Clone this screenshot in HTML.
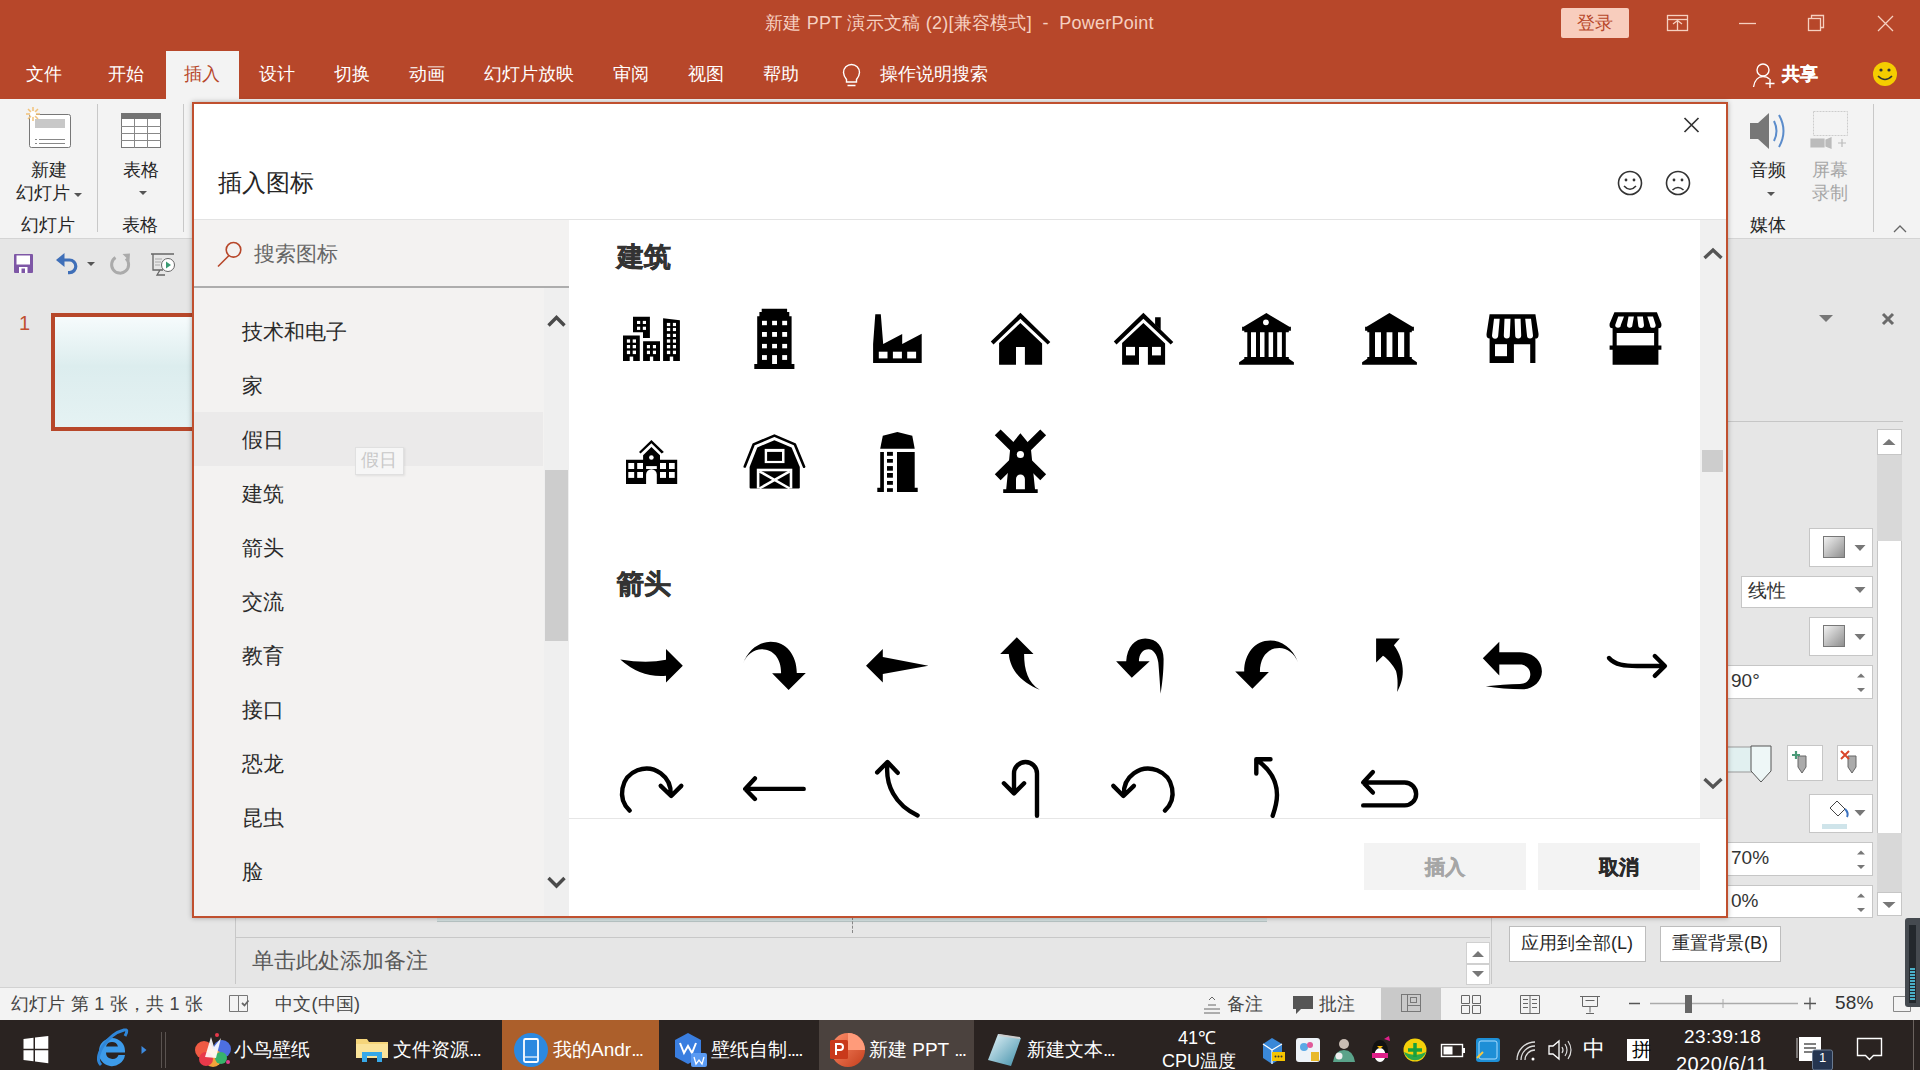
<!DOCTYPE html>
<html><head><meta charset="utf-8">
<style>
*{margin:0;padding:0;box-sizing:border-box}
html,body{width:1920px;height:1070px;overflow:hidden;background:#e6e6e6;font-family:"Liberation Sans",sans-serif;color:#262626}
.a{position:absolute;white-space:nowrap;line-height:1}
svg{position:absolute;overflow:visible}
.tt{color:#f6d0c0;font-size:18px;top:14px;letter-spacing:0.25px}
.tab{color:#fff;font-size:18px;top:65px}
.rt{font-size:18px;color:#262626}
.cat{font-size:21px;color:#2b2b2b;left:242px;margin-top:1px}
.hd{font-size:27px;font-weight:bold;color:#333;left:617px;-webkit-text-stroke:0.6px #333}
.fld{background:#fff;border:1px solid #c6c6c6}
.sb{font-size:18px;color:#444;letter-spacing:0.2px}
.tk{font-size:19px;color:#fff}
</style></head><body>
<!-- title bar + tabs -->
<div class="a" style="left:0;top:0;width:1920px;height:99px;background:#b7472a"></div>
<div class="a tt" style="left:765px">新建 PPT 演示文稿 (2)[兼容模式]&nbsp; - &nbsp;PowerPoint</div>
<div class="a" style="left:1561px;top:8px;width:68px;height:30px;background:#f8cdbd;border-radius:2px"></div>
<div class="a" style="left:1577px;top:14px;font-size:18px;color:#b7472a">登录</div>
<svg style="left:0;top:0" width="1920" height="100">
 <g fill="none" stroke="#f6d0c0" stroke-width="1.3">
  <rect x="1667.5" y="15.5" width="20" height="15"/><line x1="1667" y1="19.5" x2="1688" y2="19.5"/>
  <path d="M1673 24l4.5-3.5 4.5 3.5M1677.5 21v9"/>
  <line x1="1739" y1="23.5" x2="1756" y2="23.5"/>
  <rect x="1808.5" y="18.5" width="12" height="12"/><path d="M1811.5 18.5v-3h12v12h-3"/>
  <path d="M1878 16l15 15M1893 16l-15 15"/>
 </g>
 <g fill="none" stroke="#fff" stroke-width="1.4">
  <circle cx="1763" cy="70" r="6"/><path d="M1753.5 87c1-7 5-10.5 9.5-10.5 3 0 5 1 6.5 2.5"/><path d="M1770 79v9M1765.5 83.5h9"/>
  <path d="M846.5 79.5c-1.5-2-3-4-3-7a8 8 0 0 1 16 0c0 3-1.5 5-3 7v2.5h-10z M847.5 85.5h8"/>
 </g>
 <circle cx="1885" cy="74" r="12" fill="#f5cd00"/>
 <circle cx="1881" cy="70" r="1.6" fill="#333"/><circle cx="1889" cy="70" r="1.6" fill="#333"/>
 <path d="M1878 76q7 7 14 0" fill="none" stroke="#333" stroke-width="1.6"/>
</svg>
<div class="a" style="left:166px;top:51px;width:73px;height:48px;background:#f3f3f3"></div>
<div class="a tab" style="left:26px">文件</div>
<div class="a tab" style="left:108px">开始</div>
<div class="a tab" style="left:184px;color:#b7472a">插入</div>
<div class="a tab" style="left:259px">设计</div>
<div class="a tab" style="left:334px">切换</div>
<div class="a tab" style="left:409px">动画</div>
<div class="a tab" style="left:484px">幻灯片放映</div>
<div class="a tab" style="left:613px">审阅</div>
<div class="a tab" style="left:688px">视图</div>
<div class="a tab" style="left:763px">帮助</div>
<div class="a tab" style="left:880px">操作说明搜索</div>
<div class="a tab" style="left:1782px;font-weight:bold;-webkit-text-stroke:0.3px #fff">共享</div>

<!-- ribbon -->
<div class="a" style="left:0;top:99px;width:1920px;height:140px;background:#f3f3f3;border-bottom:1px solid #d4d4d4"></div>
<div class="a" style="left:97px;top:104px;width:1px;height:128px;background:#c8c8c8"></div>
<div class="a" style="left:183px;top:104px;width:1px;height:128px;background:#c8c8c8"></div>
<div class="a" style="left:1873px;top:104px;width:1px;height:128px;background:#c8c8c8"></div>
<div class="a rt" style="left:31px;top:161px">新建</div>
<div class="a rt" style="left:16px;top:184px">幻灯片</div>
<div class="a rt" style="left:21px;top:216px">幻灯片</div>
<div class="a rt" style="left:123px;top:161px">表格</div>
<div class="a rt" style="left:122px;top:216px">表格</div>
<div class="a rt" style="left:1750px;top:161px">音频</div>
<div class="a rt" style="left:1812px;top:161px;color:#a6a6a6">屏幕</div>
<div class="a rt" style="left:1812px;top:184px;color:#a6a6a6">录制</div>
<div class="a rt" style="left:1750px;top:216px">媒体</div>
<svg style="left:0;top:99px" width="1920" height="141">
 <!-- new slide -->
 <rect x="29.5" y="15.5" width="41" height="33" rx="2" fill="#fff" stroke="#777"/>
 <rect x="35" y="20" width="30" height="9" fill="#c8c8c8"/>
 <path d="M39 40.5h26M39 44.5h26" stroke="#888" stroke-width="1"/>
 <path d="M35 40.5h2M35 44.5h2" stroke="#888"/>
 <g stroke="#f2c27a" stroke-width="1.5"><path d="M33 8v14M26 15h14M28 10l10 10M38 10l-10 10"/></g>
 <circle cx="33" cy="15" r="3" fill="#fff"/>
 <!-- table -->
 <rect x="121.5" y="14.5" width="39" height="34" fill="#fff" stroke="#777"/>
 <rect x="121" y="14" width="40" height="6" fill="#737373"/>
 <path d="M121 27.5h40M121 34.5h40M121 41.5h40M134.5 20v29M147.5 20v29" stroke="#888" fill="none"/>
 <path d="M74 94l4 4 4-4z M139 92l4 4 4-4z M1767 93l4 4 4-4z" fill="#555"/>
 <!-- audio -->
 <path d="M1750 24h8l11-10v36l-11-10h-8z" fill="#777"/>
 <path d="M1774 22q5 10 0 20M1779 16q9 16 0 32" fill="none" stroke="#5b8ccb" stroke-width="2"/>
 <!-- screen rec -->
 <rect x="1813.5" y="12.5" width="34" height="24" fill="none" stroke="#ccc" stroke-dasharray="2 1"/>
 <path d="M1811 40h13v8h-13zM1826 41l5-2v10l-5-2z M1838 44h8M1842 40v8" fill="#bbb" stroke="#bbb" stroke-width="1.2"/>
 <path d="M1894 133l6-6 6 6" fill="none" stroke="#666" stroke-width="1.3"/>
</svg>

<!-- quick access -->
<svg style="left:0;top:240px" width="192" height="60">
 <rect x="14" y="14" width="19" height="19" rx="1" fill="#7e57a6"/>
 <rect x="16.5" y="15.5" width="13.5" height="9" fill="#fff"/>
 <rect x="19" y="27" width="8.5" height="6" fill="#fff"/><rect x="21.5" y="28.5" width="3.5" height="4.5" fill="#7e57a6"/>
 <path d="M56 20l8.5-7v14z" fill="#3f6fb8"/><path d="M63 20h6.5a6.3 6.3 0 0 1 0 12.6h-1.5" fill="none" stroke="#3f6fb8" stroke-width="3.2"/>
 <path d="M87 22l4 4 4-4z" fill="#555"/>
 <path d="M115.5 17.5A8.5 8.5 0 1 0 126 18.5" fill="none" stroke="#ababab" stroke-width="3"/><path d="M122.5 14l7.5-0.5-0.5 7.5z" fill="#ababab"/>
 <path d="M151 14h23M153 14v16h10M160 30l-3 5h8" fill="none" stroke="#666" stroke-width="1.3"/>
 <path d="M155 19h7M155 22h6M155 25h5" stroke="#aaa"/>
 <circle cx="168" cy="25" r="6.5" fill="#fff" stroke="#666"/><path d="M166 21.5v7l5-3.5z" fill="#3b9b74"/>
</svg>
<div class="a" style="left:19px;top:313px;font-size:20px;color:#c0502f;font-family:'Liberation Sans'">1</div>
<div class="a" style="left:51px;top:313px;width:160px;height:118px;border:4px solid #b7472a;background:linear-gradient(#f6fbfc,#dcedee 45%,#e5f2f3)"></div>

<!-- notes + status -->
<div class="a" style="left:235px;top:918px;width:1255px;height:66px;background:#e6e6e6;border-left:1px solid #c8c8c8"></div>
<div class="a" style="left:236px;top:937px;width:1254px;height:1px;background:#c8c8c8"></div>
<div class="a" style="left:437px;top:917px;width:830px;height:5px;background:#d3e0e0;border-bottom:1px solid #b8c4c4"></div>
<div class="a" style="left:852px;top:917px;width:1px;height:16px;border-left:1px dashed #888"></div>

<div class="a" style="left:252px;top:950px;font-size:22px;color:#595959">单击此处添加备注</div>
<div class="a" style="left:1491px;top:918px;width:1px;height:66px;background:#c8c8c8"></div>
<div class="a fld" style="left:1466px;top:942px;width:24px;height:22px;border-color:#d0d0d0"></div>
<div class="a fld" style="left:1466px;top:964px;width:24px;height:21px;border-color:#d0d0d0"></div>
<svg style="left:1466px;top:942px" width="24" height="44"><path d="M6 15l6-6 6 6z M6 29l6 6 6-6z" fill="#777"/></svg>
<div class="a fld" style="left:1509px;top:926px;width:137px;height:36px;border-color:#bdbdbd"></div>
<div class="a" style="left:1521px;top:934px;font-size:18px;color:#262626">应用到全部(L)</div>
<div class="a fld" style="left:1660px;top:926px;width:121px;height:36px;border-color:#bdbdbd"></div>
<div class="a" style="left:1672px;top:934px;font-size:18px;color:#262626">重置背景(B)</div>

<div class="a" style="left:0;top:987px;width:1920px;height:33px;background:#f3f3f3;border-top:1px solid #d2d2d2"></div>
<div class="a sb" style="left:11px;top:995px">幻灯片 第 1 张，共 1 张</div>
<div class="a sb" style="left:275px;top:995px">中文(中国)</div>
<div class="a sb" style="left:1227px;top:995px">备注</div>
<div class="a sb" style="left:1319px;top:995px">批注</div>
<div class="a" style="left:1381px;top:988px;width:60px;height:32px;background:#c9c9c9"></div>
<div class="a sb" style="left:1835px;top:993px;font-size:19px;color:#333">58%</div>
<svg style="left:0;top:990px" width="1920" height="30">
 <path d="M229.5 5.5h9v16h-9z M238.5 5.5h9v16h-9z" fill="none" stroke="#777"/><path d="M242 13l2.5 2.5 4-5" fill="none" stroke="#666" stroke-width="1.8"/>
 <path d="M1204 23h16M1204 19h16M1208 15h8M1209 10l3-3 3 3" fill="none" stroke="#666"/>
 <path d="M1293 6h20v13h-12l-5 5v-5h-3z" fill="#555"/>
 <rect x="1401.5" y="4.5" width="19" height="17" fill="none" stroke="#777"/><path d="M1407.5 4.5v17M1407.5 15.5h13" stroke="#777"/><rect x="1410.5" y="7.5" width="6" height="5" fill="none" stroke="#777"/>
 <path d="M1461.5 5.5h8v8h-8zM1472.5 5.5h8v8h-8zM1461.5 15.5h8v8h-8zM1472.5 15.5h8v8h-8z" fill="none" stroke="#666"/>
 <path d="M1520.5 5.5h19v18h-19zM1530 5.5v18M1523 9.5h5M1523 13.5h5M1523 17.5h5M1532 9.5h5M1532 13.5h5M1532 17.5h5" fill="none" stroke="#666"/>
 <path d="M1580 6.5h20M1582.5 6.5v10h15v-10M1590 16.5v6M1586 23.5h8M1585.5 10.5h9" fill="none" stroke="#666"/>
 <path d="M1629 13.5h11M1804 13.5h12M1810 7.5v12" stroke="#555" stroke-width="1.3"/>
 <path d="M1650 13.5h148" stroke="#aaa" stroke-width="1.5"/>
 <path d="M1723 9v9" stroke="#aaa"/>
 <rect x="1685" y="5" width="7" height="18" fill="#666"/>
 <path d="M1893.5 6.5h17v15h-17z" fill="none" stroke="#888"/>
</svg>

<!-- taskbar -->
<div class="a" style="left:0;top:1020px;width:1920px;height:50px;background:#2a2321"></div>
<div class="a" style="left:502px;top:1020px;width:157px;height:50px;background:#ac5f2b"></div>
<div class="a" style="left:819px;top:1020px;width:155px;height:50px;background:#4b423e"></div>
<div class="a tk" style="left:234px;top:1040px">小鸟壁纸</div>
<div class="a tk" style="left:393px;top:1040px">文件资源<span style="letter-spacing:-1.5px">...</span></div>
<div class="a tk" style="left:553px;top:1040px">我的Andr<span style="letter-spacing:-1.5px">...</span></div>
<div class="a tk" style="left:711px;top:1040px">壁纸自制<span style="letter-spacing:-1.5px">....</span></div>
<div class="a tk" style="left:869px;top:1040px">新建 PPT <span style="letter-spacing:-1.5px">...</span></div>
<div class="a tk" style="left:1027px;top:1040px">新建文本<span style="letter-spacing:-1.5px">...</span></div>
<div class="a tk" style="left:1178px;top:1029px;font-size:18px">41℃</div>
<div class="a tk" style="left:1162px;top:1052px;font-size:18px">CPU温度</div>
<div class="a tk" style="left:1684px;top:1027px;font-size:19px;letter-spacing:0.4px">23:39:18</div>
<div class="a tk" style="left:1676px;top:1054px;font-size:20px;letter-spacing:0.5px">2020/6/11</div>
<div class="a tk" style="left:1583px;top:1038px;font-size:22px">中</div>
<svg style="left:0;top:1020px" width="1920" height="50">
 <defs>
  <linearGradient id="ppt" x1="0" y1="0" x2="1" y2="1"><stop offset="0" stop-color="#ff8f6b"/><stop offset="1" stop-color="#c43e1c"/></linearGradient>
  <linearGradient id="np" x1="0" y1="0" x2="1" y2="1"><stop offset="0" stop-color="#e8f6fb"/><stop offset="1" stop-color="#3e8ea8"/></linearGradient>
 </defs>
 <path d="M23.5 19l10-1.2v11H23.5z M35 17.6l13.3-1.6v12.8H35z M23.5 30.3h10v11L23.5 40z M35 30.3h13.3v12.9L35 41.5z" fill="#fff"/>
 <path d="M99 31a13 13 0 0 1 26 0v1.5H106a6.5 6.5 0 0 0 12.5 2.5h6.5a13 13 0 0 1-26-4z M106 26.5h12a6.3 6.3 0 0 0-12 0z" fill="#3d9be9" fill-rule="evenodd"/>
 <path d="M101 45q-6-6 2-19q9-13 21-16q5-1 1 6" fill="none" stroke="#2f86d8" stroke-width="3"/>
 <path d="M141.5 26l5 4-5 4z" fill="#3d8be0"/>
 <path d="M161.5 12v36M165.5 12v36" stroke="#5a5350" stroke-width="1"/>
 <circle cx="204" cy="30" r="9" fill="#ef5a43"/><circle cx="222" cy="29" r="9" fill="#4d6fe0"/><circle cx="213" cy="38" r="9" fill="#f2a33a"/><circle cx="206" cy="39" r="7" fill="#e8394a"/><circle cx="221" cy="38" r="6" fill="#37b36b"/>
 <path d="M205 37l6-20 3 10 7-9-5 20z" fill="#fff" opacity=".9"/>
 <circle cx="217" cy="15" r="2" fill="#e8394a"/><circle cx="228" cy="42" r="2" fill="#e04090"/>
 <path d="M356 19h11l2 3h19v16h-32z" fill="#f5d57a"/><path d="M356 24h32v14h-32z" fill="#fae39a"/>
 <path d="M362 42v-10h20v10h-5v-6h-10v6z" fill="#37a8e8"/>
 <circle cx="531" cy="30" r="17" fill="#2c89e0"/><rect x="524" y="19" width="14" height="23" rx="1.5" fill="none" stroke="#fff" stroke-width="1.8"/><path d="M525 37h12" stroke="#fff" stroke-width="1.2"/>
 <path d="M688 13l13 7v17l-13 7-13-7V20z" fill="#3a7ee0"/>
 <path d="M680 23l4 10 4-7 4 7 4-10" fill="none" stroke="#fff" stroke-width="2"/>
 <rect x="691" y="33" width="16" height="14" rx="2" fill="#5a9af2"/><path d="M694 37l2 7 3-4 3 4 2-7" fill="none" stroke="#fff" stroke-width="1.3"/>
 <circle cx="848" cy="30" r="17" fill="url(#ppt)"/><path d="M848 13a17 17 0 0 1 17 17h-17z" fill="#ff9b7a"/>
 <rect x="830" y="20" width="18" height="19" rx="1.5" fill="#c9391b"/><path d="M836 35v-11h4a3 3 0 0 1 0 6h-4" fill="none" stroke="#fff" stroke-width="2"/>
 <path d="M998 14l23 4-10 28-23-6z" fill="url(#np)"/><path d="M999 15l21 3" stroke="#ccc" stroke-width="2"/>
 <path d="M1263 24l9-6 10 6v14l-10 6-9-6z" fill="#3a88d8"/><path d="M1263 24l9 6 10-6M1272 30v14" stroke="#fff" stroke-width="1.2" fill="none"/>
 <rect x="1272" y="32" width="13" height="9" fill="#f5c400"/><circle cx="1275.5" cy="36.5" r="1" fill="#333"/><circle cx="1278.5" cy="36.5" r="1" fill="#333"/><circle cx="1281.5" cy="36.5" r="1" fill="#333"/>
 <rect x="1296" y="18" width="24" height="24" rx="3" fill="#eef3f8"/><circle cx="1304" cy="27" r="4" fill="#5aa9e6"/><circle cx="1310" cy="25" r="3" fill="#e05a9a"/><rect x="1311" y="32" width="8" height="9" fill="#e8b92a"/>
 <circle cx="1344" cy="24" r="5" fill="#c8bcb3"/><path d="M1333 42q2-12 11-12t11 12z" fill="#5aa38a"/><circle cx="1339" cy="36" r="3.5" fill="#eee"/>
 <ellipse cx="1380" cy="31" rx="8" ry="11" fill="#111"/><ellipse cx="1380" cy="35" rx="5.5" ry="7" fill="#fff"/><path d="M1372 33h16v5h-16z" fill="#e0208a"/><path d="M1384 19l5-3 1 5z" fill="#e0208a"/><path d="M1377 26h6l-3 3z" fill="#f5b400"/>
 <circle cx="1415" cy="30" r="11.5" fill="#f5d10a"/><path d="M1404 32a11.5 11.5 0 0 0 22 0q-11 6-22 0z" fill="#2aa84a"/><path d="M1415 23v14M1408 30h14" stroke="#19a03c" stroke-width="3.5"/>
 <rect x="1441.5" y="24.5" width="21" height="12" fill="none" stroke="#fff" stroke-width="1.4"/><rect x="1443.5" y="26.5" width="9" height="8" fill="#fff"/><rect x="1463" y="28" width="2" height="5" fill="#fff"/>
 <rect x="1476" y="18" width="24" height="24" rx="3" fill="#1e8fd6"/><rect x="1479" y="21" width="18" height="18" rx="2" fill="none" stroke="#a8dcff" stroke-width="1"/><path d="M1477 38l6-6" stroke="#f5c842" stroke-width="2"/>
 <g fill="none" stroke="#ddd" stroke-width="1.3"><path d="M1517 40a18 18 0 0 1 18-18M1521 40a14 14 0 0 1 14-14M1525 40a10 10 0 0 1 10-10"/></g><circle cx="1533" cy="39" r="1.5" fill="#fff"/>
 <path d="M1549 26h4l6-5v18l-6-5h-4z" fill="none" stroke="#fff" stroke-width="1.3"/><path d="M1562 27q2 3 0 6M1565 24q4 6 0 12M1568 21q6 9 0 18" fill="none" stroke="#ddd" stroke-width="1.2"/>
 <rect x="1627" y="19" width="22" height="22" fill="#fff"/>
 <path d="M1797 18v20" stroke="#ccc"/><rect x="1799" y="17" width="22" height="24" fill="#fff"/><path d="M1804 24h12M1804 28h12M1804 32h8" stroke="#555" stroke-width="1.5"/>
 <rect x="1812.5" y="30" width="20" height="20" rx="2" fill="#253550" stroke="#6a7a90"/>
 <path d="M1857.5 18.5h24v17h-8l-4 4-4-4h-8z" fill="none" stroke="#fff" stroke-width="1.4"/>
 <path d="M1913.5 0v50" stroke="#6a625e"/>
</svg>
<div class="a" style="left:1632px;top:1040px;font-size:19px;color:#000">拼</div>
<div class="a" style="left:1819px;top:1051px;font-size:13px;color:#fff">1</div>


<!-- right format pane -->
<div class="a" style="left:1727px;top:421px;width:176px;height:1px;background:#c6c6c6"></div>
<svg style="left:1727px;top:240px" width="193" height="750">
 <path d="M92 75l7 7 7-7z" fill="#777"/>
 <path d="M156 74l10 10M166 74l-10 10" stroke="#6a6a6a" stroke-width="3"/>
</svg>
<div class="a fld" style="left:1877px;top:429px;width:25px;height:26px"></div>
<div class="a" style="left:1877px;top:455px;width:25px;height:86px;background:#d8d8d8"></div>
<div class="a" style="left:1877px;top:541px;width:25px;height:292px;background:#fff;border-left:1px solid #c6c6c6;border-right:1px solid #c6c6c6"></div>
<div class="a" style="left:1877px;top:833px;width:25px;height:59px;background:#d8d8d8"></div>
<div class="a fld" style="left:1877px;top:892px;width:25px;height:24px"></div>
<div class="a fld" style="left:1809px;top:528px;width:64px;height:39px"></div>
<div class="a fld" style="left:1741px;top:576px;width:132px;height:32px"></div>
<div class="a" style="left:1748px;top:581px;font-size:19px;color:#333">线性</div>
<div class="a fld" style="left:1809px;top:617px;width:64px;height:39px"></div>
<div class="a fld" style="left:1710px;top:665px;width:163px;height:34px"></div>
<div class="a" style="left:1731px;top:671px;font-size:19px;color:#333">90°</div>
<div class="a fld" style="left:1787px;top:745px;width:36px;height:36px"></div>
<div class="a fld" style="left:1837px;top:745px;width:36px;height:36px"></div>
<div class="a fld" style="left:1809px;top:794px;width:64px;height:39px"></div>
<div class="a fld" style="left:1710px;top:842px;width:163px;height:34px"></div>
<div class="a" style="left:1731px;top:848px;font-size:19px;color:#333">70%</div>
<div class="a fld" style="left:1710px;top:885px;width:163px;height:33px"></div>
<div class="a" style="left:1731px;top:891px;font-size:19px;color:#333">0%</div>
<svg style="left:1700px;top:420px" width="220" height="500">
 <path d="M182.5 25l6.5-6 6.5 6z M182.5 482l6.5 6 6.5-6z" fill="#777"/>
 <defs><linearGradient id="gg" x1="0" y1="0" x2="1" y2="1"><stop offset="0" stop-color="#f4f4f4"/><stop offset="1" stop-color="#8c8c8c"/></linearGradient></defs>
 <rect x="123.5" y="116.5" width="21" height="21" fill="url(#gg)" stroke="#777"/>
 <rect x="123.5" y="205.5" width="21" height="21" fill="url(#gg)" stroke="#777"/>
 <path d="M154.5 125l5.5 6 5.5-6z M154.5 167l5.5 6 5.5-6z M154.5 214l5.5 6 5.5-6z M154.5 390l5.5 6 5.5-6z" fill="#777"/>
 <path d="M157 257.5l4-4 4 4z M157 268l4 4 4-4z M157 434.5l4-4 4 4z M157 445l4 4 4-4z M157 477.5l4-4 4 4z M157 488l4 4 4-4z" fill="#777"/>
 <rect x="27" y="327" width="34" height="25" fill="#e1f0f0" stroke="#999"/>
 <path d="M51 326h20v25l-10 11-10-11z" fill="#eef7f7" stroke="#555"/>
 <path d="M98 336v11l4 6 4-6v-11z" fill="#aaa" stroke="#666"/><path d="M92 335h8M96 331v8" stroke="#4a9a78" stroke-width="2.2"/>
 <path d="M148 336v11l4 6 4-6v-11z" fill="#aaa" stroke="#666"/><path d="M141 331l8 8M149 331l-8 8" stroke="#d9462b" stroke-width="2"/>
 <path d="M130 388l7-7 8 8-7 7z" fill="#fff" stroke="#444"/><path d="M145 389q4 4 2 8" stroke="#3b72c0" stroke-width="2" fill="none"/>
 <rect x="122" y="404" width="25" height="5" fill="#cfe4ea"/>
</svg>
<div class="a" style="left:1905px;top:918px;width:15px;height:89px;background:#454a50;border-radius:3px 0 0 3px"></div><div class="a" style="left:1909px;top:925px;width:7px;height:78px;background:#23282d"></div><div class="a" style="left:1910px;top:968px;width:5px;height:33px;background:repeating-linear-gradient(#4ab0c8 0 2px,#23282d 2px 3px)"></div>

<!-- DIALOG -->
<div class="a" style="left:192px;top:102px;width:1536px;height:816px;border:2px solid #c0502f;background:#fff;box-shadow:0 0 5px rgba(0,0,0,.3)"></div>
<div class="a" style="left:194px;top:219px;width:1532px;height:1px;background:#e3e3e3"></div>
<div class="a" style="left:218px;top:171px;font-size:24px;color:#262626">插入图标</div>
<svg style="left:1600px;top:104px" width="126" height="100">
 <path d="M84.5 14l14 14M98.5 14l-14 14" stroke="#333" stroke-width="1.7"/>
 <g fill="none" stroke="#333" stroke-width="1.6">
  <circle cx="30" cy="79" r="11.5"/><path d="M24 82q6 6.5 12 0"/>
  <circle cx="78" cy="79" r="11.5"/><path d="M72.5 86q5.5-5 11 0"/>
 </g>
 <circle cx="26" cy="76" r="1.4" fill="#333"/><circle cx="34" cy="76" r="1.4" fill="#333"/>
 <circle cx="74" cy="76" r="1.4" fill="#333"/><circle cx="82" cy="76" r="1.4" fill="#333"/>
</svg>
<!-- left panel -->
<div class="a" style="left:194px;top:220px;width:375px;height:696px;background:#f3f2f1"></div>
<div class="a" style="left:194px;top:286px;width:375px;height:2px;background:#adadad"></div>
<svg style="left:194px;top:220px" width="375" height="70">
 <circle cx="39.5" cy="29.8" r="7.3" fill="none" stroke="#b7472a" stroke-width="1.6"/>
 <path d="M35 35.5l-11 11" stroke="#b7472a" stroke-width="1.6"/>
</svg>
<div class="a" style="left:254px;top:243px;font-size:21px;color:#666">搜索图标</div>
<div class="a" style="left:194px;top:412px;width:349px;height:54px;background:#ebeaea"></div>
<div class="a cat" style="top:320px">技术和电子</div>
<div class="a cat" style="top:374px">家</div>
<div class="a cat" style="top:428px">假日</div>
<div class="a cat" style="top:482px">建筑</div>
<div class="a cat" style="top:536px">箭头</div>
<div class="a cat" style="top:590px">交流</div>
<div class="a cat" style="top:644px">教育</div>
<div class="a cat" style="top:698px">接口</div>
<div class="a cat" style="top:752px">恐龙</div>
<div class="a cat" style="top:806px">昆虫</div>
<div class="a cat" style="top:860px">脸</div>
<div class="a" style="left:544px;top:288px;width:25px;height:628px;background:#efefef"></div>
<div class="a" style="left:545px;top:470px;width:23px;height:171px;background:#cdcdcd"></div>
<svg style="left:545px;top:300px" width="24" height="600">
 <path d="M3.5 25.5l8-8 8 8M3.5 578l8 8 8-8" fill="none" stroke="#4a4a4a" stroke-width="3.4"/>
</svg>
<div class="a" style="left:355px;top:447px;width:49px;height:28px;background:#f6f6f6;border:1px solid #e0e0e0;box-shadow:1px 1px 2px rgba(0,0,0,.08)"></div>
<div class="a" style="left:361px;top:451px;font-size:18px;color:#c8c8c8">假日</div>
<!-- right content -->
<div class="a" style="left:1700px;top:220px;width:26px;height:598px;background:#f0f0f0"></div>
<div class="a" style="left:1702px;top:450px;width:21px;height:22px;background:#cdcdcd"></div>
<svg style="left:1700px;top:220px" width="26" height="600">
 <path d="M4.5 38l8.5-8 8.5 8M4.5 559l8.5 8 8.5-8" fill="none" stroke="#555" stroke-width="3.4"/>
</svg>
<div class="a" style="left:569px;top:818px;width:1157px;height:1px;background:#e6e6e6"></div>
<div class="a hd" style="top:244px">建筑</div>
<div class="a hd" style="top:571px">箭头</div>
<div id="icons"><div class="a" style="left:569px;top:220px;width:1131px;height:598px;overflow:hidden"><svg style="left:0;top:0" width="1131" height="598"><g transform="translate(-569 -220)"><g transform="translate(611 299)"><path d="M12 36.5H28.8V62H12z M22 17.7H38.9V38.9H32V33.3H22z M32.1 42.2H49V62H32.1z M52.1 19.2L68.9 21.3V62H52.1z" fill="#000"/><rect x="15.9" y="40.4" width="3.2" height="3.3" fill="#fff"/><rect x="15.9" y="46" width="3.2" height="3.3" fill="#fff"/><rect x="15.9" y="51.6" width="3.2" height="3.5" fill="#fff"/><rect x="21.7" y="40.4" width="3.3" height="3.3" fill="#fff"/><rect x="21.7" y="46" width="3.3" height="3.3" fill="#fff"/><rect x="21.7" y="51.6" width="3.3" height="3.5" fill="#fff"/><rect x="18.7" y="57.6" width="3.5" height="4.9" fill="#fff"/><rect x="26" y="21.9" width="3.2" height="3.1" fill="#fff"/><rect x="26" y="27.7" width="3.2" height="3.2" fill="#fff"/><rect x="31.8" y="21.9" width="3.2" height="3.1" fill="#fff"/><rect x="31.8" y="27.7" width="3.2" height="3.2" fill="#fff"/><rect x="35.9" y="46" width="3.1" height="3.3" fill="#fff"/><rect x="35.9" y="51.7" width="3.1" height="3.4" fill="#fff"/><rect x="41.9" y="46" width="3.1" height="3.3" fill="#fff"/><rect x="41.9" y="51.7" width="3.1" height="3.4" fill="#fff"/><rect x="38.9" y="57.6" width="3.3" height="4.9" fill="#fff"/><rect x="55.9" y="23.9" width="3.3" height="3.2" fill="#fff"/><rect x="55.9" y="28.9" width="3.3" height="3.2" fill="#fff"/><rect x="55.9" y="34.8" width="3.3" height="3.2" fill="#fff"/><rect x="55.9" y="40.4" width="3.3" height="3.3" fill="#fff"/><rect x="55.9" y="46" width="3.3" height="3.3" fill="#fff"/><rect x="55.9" y="51.7" width="3.3" height="3.4" fill="#fff"/><rect x="61.9" y="23.9" width="3.1" height="3.2" fill="#fff"/><rect x="61.9" y="28.9" width="3.1" height="3.2" fill="#fff"/><rect x="61.9" y="34.8" width="3.1" height="3.2" fill="#fff"/><rect x="61.9" y="40.4" width="3.1" height="3.3" fill="#fff"/><rect x="61.9" y="46" width="3.1" height="3.3" fill="#fff"/><rect x="61.9" y="51.7" width="3.1" height="3.4" fill="#fff"/><rect x="58.8" y="57.6" width="3.4" height="4.9" fill="#fff"/></g><g transform="translate(734 299)"><path d="M27.7 9.7H53.1V13.1H55.3V17.2H57.6V65H60.4V69.9H20.3V65H23.2V17.2H25.4V13.1H27.7z" fill="#000"/><rect x="28" y="21.8" width="4.9" height="4.4" fill="#fff"/><rect x="28" y="33" width="4.9" height="4.8" fill="#fff"/><rect x="28" y="44.9" width="4.9" height="4.4" fill="#fff"/><rect x="28" y="56.1" width="4.9" height="4.8" fill="#fff"/><rect x="38.1" y="21.8" width="4.9" height="4.4" fill="#fff"/><rect x="38.1" y="33" width="4.9" height="4.8" fill="#fff"/><rect x="38.1" y="44.9" width="4.9" height="4.4" fill="#fff"/><rect x="48.2" y="21.8" width="4.9" height="4.4" fill="#fff"/><rect x="48.2" y="33" width="4.9" height="4.8" fill="#fff"/><rect x="48.2" y="44.9" width="4.9" height="4.4" fill="#fff"/><rect x="48.2" y="56.1" width="4.9" height="4.8" fill="#fff"/><rect x="38.1" y="56.1" width="4.9" height="8.9" fill="#fff"/></g><g transform="translate(857 299)"><path d="M18.3 15.3H23.8L26.2 44.9L45.2 35.1V44.9L64.7 34.8V63.9H16.1V44.9z" fill="#000"/><rect x="21.8" y="52.7" width="8.7" height="6.7" fill="#fff"/><rect x="35.9" y="52.7" width="9.0" height="6.7" fill="#fff"/><rect x="50.2" y="52.7" width="8.9" height="6.7" fill="#fff"/></g><g transform="translate(980 299)"><path d="M40.4 13.8L70.3 43L67.7 45.4L40.4 19.8L13.5 45.4L10.8 42.6z" fill="#000"/><path d="M40.4 23.9L62.1 44.5V65.8H44.9V47.9H36V65.8H19.1V44.1z" fill="#000"/></g><g transform="translate(1103 299)"><path d="M40.4 13.8L70.3 43L67.7 45.4L40.4 19.8L13.5 45.4L10.8 42.6z" fill="#000"/><path d="M40.4 23.9L62.1 44.5V65.8H44.9V47.9H36V65.8H19.1V44.1z" fill="#000"/><path d="M52.1 18.3H57.7V31L52.1 25.7z" fill="#000"/><rect x="23" y="47.9" width="9" height="8.5" fill="#fff"/><rect x="49" y="47.9" width="8.9" height="8.5" fill="#fff"/></g><g transform="translate(1226 299)"><path d="M40.4 14.1L63.4 27.7H64.9V31.8H62.8V33.3H18.3V31.8H16.1V27.7H17.6z" fill="#000"/><rect x="21.3" y="33" width="3.7" height="25.2" fill="#000"/><rect x="30" y="33" width="4" height="25.2" fill="#000"/><rect x="38.5" y="33" width="4.1" height="25.2" fill="#000"/><rect x="47.1" y="33" width="4.1" height="25.2" fill="#000"/><rect x="55.9" y="33" width="3.9" height="25.2" fill="#000"/><path d="M18.3 57.9H62.8V59.8L67.9 63.2V65.8H13.1V63.2L18.3 59.8z" fill="#000"/><circle cx="39.9" cy="23.3" r="2.9" fill="#fff"/></g><g transform="translate(1349 299)"><path d="M40.4 14.1L63.4 27.7H64.9V31.8H62.8V33.3H18.3V31.8H16.1V27.7H17.6z" fill="#000"/><rect x="20.3" y="33" width="5.7" height="25.2" fill="#000"/><rect x="32" y="33" width="5.6" height="25.2" fill="#000"/><rect x="43.4" y="33" width="5.6" height="25.2" fill="#000"/><rect x="55.2" y="33" width="5.5" height="25.2" fill="#000"/><path d="M18.3 57.9H62.8V59.8L67.9 63.2V65.8H13.1V63.2L18.3 59.8z" fill="#000"/></g><g transform="translate(1472 299)"><path d="M17.6 15.3H63.4L66.5 34.5Q67 39.6 63.4 39.6V63.9H58.2V45.2H41.9V63.9H17.6V39.6Q14 39.6 14.6 34.5z" fill="#000"/><rect x="23" y="45.2" width="12" height="12.0" fill="#fff"/><path d="M22 19.8H27.7L26.2 36.6A3.0999999999999996 3.0999999999999996 0 0 1 20 36.6z" fill="#fff"/><path d="M32.5 19.8H38.5L37.8 36.6A2.9999999999999982 2.9999999999999982 0 0 1 31.8 36.6z" fill="#fff"/><path d="M42.6 19.8H48.6L49.2 36.6A3.0 3.0 0 0 1 43.2 36.6z" fill="#fff"/><path d="M53.2 19.8H59L61 36.6A3.0 3.0 0 0 1 55 36.6z" fill="#fff"/></g><g transform="translate(1595 299)"><path d="M19.4 13.3H61.9L66.4 24.7Q67 29.2 63.4 29.2V46.4H66.4V50.8H63.4V65.8H17.6V50.8H14.6V46.4H17.6V29.2Q14 29.2 14.6 24.7z" fill="#000"/><rect x="21.7" y="34" width="37.4" height="12.4" fill="#fff"/><path d="M23.2 17.6H29L25.8 26A2.8000000000000007 2.8000000000000007 0 0 1 20.2 26z" fill="#fff"/><path d="M33.5 17.6H38.9L37.4 26A2.6999999999999993 2.6999999999999993 0 0 1 32 26z" fill="#fff"/><path d="M42.2 17.6H47.9L49 26A2.8999999999999986 2.8999999999999986 0 0 1 43.2 26z" fill="#fff"/><path d="M52.3 17.6H58L60.7 26A2.8500000000000014 2.8500000000000014 0 0 1 55 26z" fill="#fff"/></g><g transform="translate(611 422)"><path d="M40.4 17.9L52.9 29.9L50.7 31.6L40.4 21.3L29.6 31.6L28 29.9z" fill="#000"/><path d="M40.4 25L49 33.3V37.8H66.2V61.9H45.8V52.5A5.35 5.35 0 0 0 35.1 52.5V61.9H15V37.8H32.1V33.3z" fill="#000"/><circle cx="40.4" cy="35.5" r="2.3" fill="#fff"/><rect x="35.1" y="44.1" width="10.7" height="2.9" fill="#fff"/><rect x="17.3" y="41" width="5.9" height="6" fill="#fff"/><rect x="17.3" y="50" width="5.9" height="5.9" fill="#fff"/><rect x="26.2" y="41" width="5.8" height="6" fill="#fff"/><rect x="26.2" y="50" width="5.8" height="5.9" fill="#fff"/><rect x="49" y="41" width="6" height="6" fill="#fff"/><rect x="49" y="50" width="6" height="5.9" fill="#fff"/><rect x="58" y="41" width="5.7" height="6" fill="#fff"/><rect x="58" y="50" width="5.7" height="5.9" fill="#fff"/></g><g transform="translate(734 422)"><path d="M10.8 44.5L19.6 22.4L40.4 13.6L60.9 22.4L70.1 44.7" fill="none" stroke="#000" stroke-width="2.6" stroke-linejoin="round" stroke-linecap="round"/><path d="M40.4 18.3L57.6 25.4L65.8 44.9V65.5Q65.8 66.5 64.8 66.5H16.6Q15.6 66.5 15.6 65.5V44.9L23.3 25.4z" fill="#000"/><rect x="30.7" y="26.9" width="19.8" height="14.2" fill="#fff"/><rect x="33.1" y="29.9" width="14.9" height="9.0" fill="#000"/><rect x="22.8" y="46.7" width="35.5" height="19.8" fill="#fff"/><rect x="25.4" y="49.3" width="30.3" height="17.2" fill="#000"/><path d="M25.4 49.3L55.7 66.5M55.7 49.3L25.4 66.5" stroke="#fff" stroke-width="2.5"/></g><g transform="translate(857 422)"><path d="M40.4 10.1L55.3 13.8L57.7 26.8H23.2L25.8 13.8z" fill="#000"/><path d="M23.2 29.9H26.9V69.9H20.3V65.8H23.2z M40 29.9H57.7V65.8H60.7V69.9H40z" fill="#000"/><rect x="30" y="29.9" width="5.9" height="3.9" fill="#000"/><rect x="30" y="37" width="5.9" height="3.7" fill="#000"/><rect x="30" y="44.1" width="5.9" height="4.6" fill="#000"/><rect x="30" y="51" width="5.9" height="4.7" fill="#000"/><rect x="30" y="59" width="5.9" height="3.8" fill="#000"/><rect x="30" y="66.2" width="5.9" height="3.7" fill="#000"/></g><g transform="translate(980 422)"><path d="M17.7 10.4L63.2 55.3M63.2 10.4L17.7 55.3" stroke="#000" stroke-width="8.3"/><path d="M40.4 11.2L48.4 20.9L50.8 25.8L55 67.3H57.7V71H23.2V67.3H26.2L30.3 25.8L32.5 20.9z" fill="#000"/><circle cx="40.4" cy="32.5" r="3.6" fill="#fff"/><path d="M36 67.3V57A4.45 4.45 0 0 1 44.9 57V67.3z" fill="#fff"/></g><g transform="translate(611 625)"><path d="M9.3 34.4Q35 39 55 34.8V23.9L71.8 40.7L55 57.6V50.8Q30 53 9.3 34.4z" fill="#000"/></g><g transform="translate(734 625)"><path d="M9 38.9C14 24 26 16.8 36.6 16.8C52 16.8 62.8 30 62.8 47.9H71.8L54.6 65L38.1 48.2H47.1C47.1 33 39 24.3 27.7 24.3C20 24.3 12 30 9 38.9z" fill="#000"/></g><g transform="translate(857 625)"><path d="M9 40.7L25.8 23.9V32.1L71.4 40.7L25.8 49V57.6z" fill="#000"/></g><g transform="translate(980 625)"><path d="M36.8 12.3L53.5 29H44.1C44.1 45 48 58 59.8 64.7C42 58 30 45 28.8 29H20.2z" fill="#000"/></g><g transform="translate(1103 625)"><path d="M13.1 36.3H23.2C24 22 32 13.5 42.2 13.5C54 13.5 60.6 22 60.6 34C60.6 48 59 60 57.6 68.8C57 58 56 45 55.3 37.4C54 29 50 24.3 45.6 24.3C40 24.3 36 29 35.9 36.3H46.7L28.8 52.7z" fill="#000"/></g><g transform="translate(1226 625)"><path transform="translate(81 -1.3) scale(-1 1)" d="M9 38.9C14 24 26 16.8 36.6 16.8C52 16.8 62.8 30 62.8 47.9H71.8L54.6 65L38.1 48.2H47.1C47.1 33 39 24.3 27.7 24.3C20 24.3 12 30 9 38.9z" fill="#000"/></g><g transform="translate(1349 625)"><path d="M27.1 13.5H50.8L44.9 20.2C51 28 53.8 38 53.8 46.4C53.8 55 51 61 48.2 66.9C49 58 48.6 52 47 46C44 40 39 34 34 30.7L27.1 37.4z" fill="#000"/></g><g transform="translate(1472 625)"><path d="M10.8 33.3L27.3 16.8V27.3H47.9C61 27.3 69.9 36 69.9 46.4C69.9 56 61 64.3 50.8 64.3C38 64.3 25 63 13.8 61.3C25 60 37 59 47.9 59C54 59 58.3 55 58.3 49.3C58.3 44 54 39.6 48.2 39.6H27.3V50.5z" fill="#000"/></g><g transform="translate(1595 625)"><path d="M14 33C20 40 30 41 42 41H69.5M59.8 31L69.9 41L59.8 50.8" fill="none" stroke="#000" stroke-width="4.4" stroke-linecap="round" stroke-linejoin="round"/></g><g transform="translate(611 750)"><path d="M18.7 60.6A24.3 24.3 0 1 1 59.6 44.5M49.7 35.9L60.2 46L70.3 35.9" fill="none" stroke="#000" stroke-width="4.4" stroke-linecap="round" stroke-linejoin="round"/></g><g transform="translate(734 750)"><path d="M11.5 38.9H69.7M20.9 28.4L11.2 38.9L20.9 49" fill="none" stroke="#000" stroke-width="4.4" stroke-linecap="round" stroke-linejoin="round"/></g><g transform="translate(857 750)"><path d="M30.5 13C28 35 38 55 60.6 65.4M20.2 22.4L30.5 12L40.7 22.8" fill="none" stroke="#000" stroke-width="4.4" stroke-linecap="round" stroke-linejoin="round"/></g><g transform="translate(980 750)"><path d="M57 65.8V23.5A11.5 11.5 0 0 0 34 23.5V43M23.9 33.3L34 43.4L44.1 33.3" fill="none" stroke="#000" stroke-width="4.4" stroke-linecap="round" stroke-linejoin="round"/></g><g transform="translate(1103 750)"><path transform="translate(80.6 0) scale(-1 1)" d="M18.7 60.6A24.3 24.3 0 1 1 59.6 44.5M49.7 35.9L60.2 46L70.3 35.9" fill="none" stroke="#000" stroke-width="4.4" stroke-linecap="round" stroke-linejoin="round"/></g><g transform="translate(1226 750)"><path d="M31 10C45 20 51 32 51 45C51 53 49 59 46.7 65.8M44.5 9.3H30.3V23.6" fill="none" stroke="#000" stroke-width="4.4" stroke-linecap="round" stroke-linejoin="round"/></g><g transform="translate(1349 750)"><path d="M14.5 32.5H55.7A11.45 11.45 0 0 1 55.7 55.4H14.2M23.9 22L14.2 32.5L23.9 42.6" fill="none" stroke="#000" stroke-width="4.4" stroke-linecap="round" stroke-linejoin="round"/></g></g></svg></div></div><!--/icons-->
<div class="a" style="left:1364px;top:843px;width:162px;height:47px;background:#f3f3f3"></div>
<div class="a" style="left:1425px;top:857px;font-size:20px;font-weight:bold;color:#a6a6a6;-webkit-text-stroke:0.5px #a6a6a6">插入</div>
<div class="a" style="left:1538px;top:843px;width:162px;height:47px;background:#f3f3f3"></div>
<div class="a" style="left:1599px;top:857px;font-size:20px;font-weight:bold;color:#2a2a2a;-webkit-text-stroke:0.5px #2a2a2a">取消</div>
</body></html>
